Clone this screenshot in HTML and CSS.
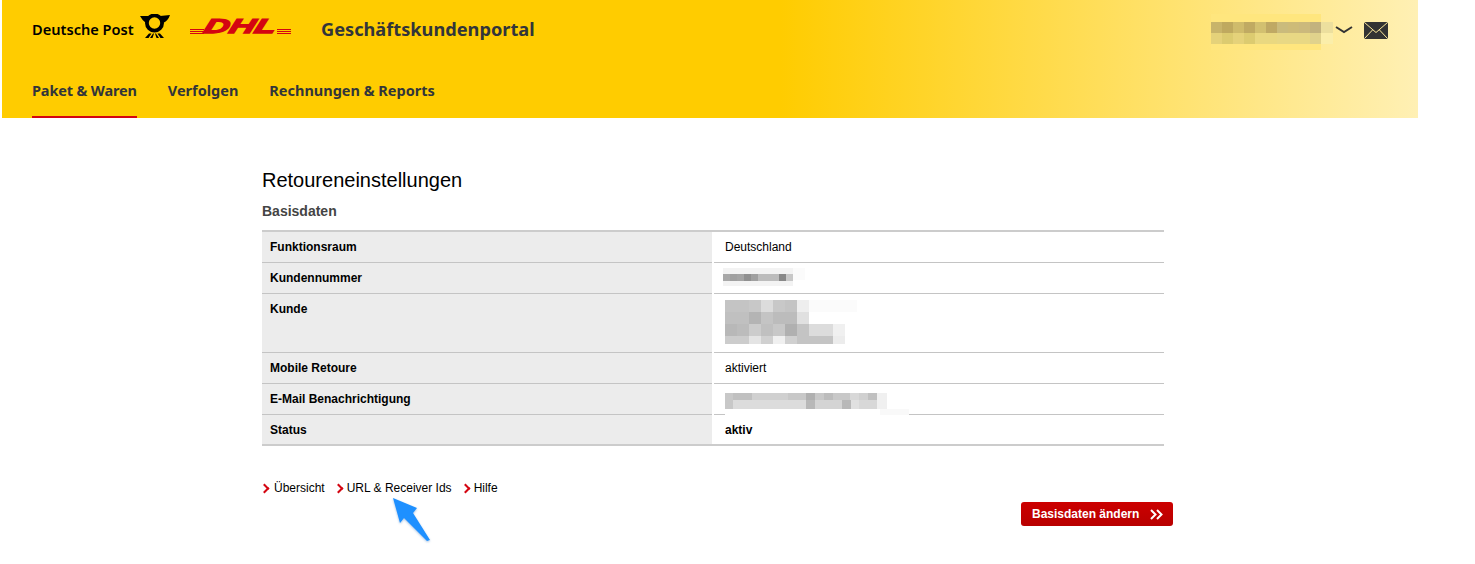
FILE: index.html
```html
<!DOCTYPE html>
<html lang="de">
<head>
    <meta charset="UTF-8">
    <meta name="viewport" content="width=device-width, initial-scale=1.0">
    <title>Retoureneinstellungen</title>
    <link rel="stylesheet" href="styles.css">
</head>
<body>
    <header class="topbar">
        <div class="topbar-row">
            <div class="brand">
                <span class="post-name">Deutsche Post</span>
                <svg class="post-horn" viewBox="0 0 33 24" width="33" height="24">
                    <circle cx="16.5" cy="9" r="7.6" fill="none" stroke="#000" stroke-width="3.8"/>
                    <path d="M2 2 L10 2 L11 4 L8 9 Q4 6 2 2Z M32 1 L22 2 L21 4 L25 9 Q30 7 32 1Z" fill="#000"/>
                    <path d="M7 24 L11 19.5 H13.5 L10.5 24Z M12 24 L15 19.5 H16 L14.5 24Z M26 24 L22 19.5 H19.5 L22.5 24Z M21 24 L18 19.5 H17 L18.5 24Z" fill="#000"/>
                </svg>
                <div class="dhl-logo">
                    <span class="dhl-stripes"></span>
                    <span class="dhl-name">DHL</span>
                    <span class="dhl-stripes"></span>
                </div>
                <span class="portal-name">Geschäftskundenportal</span>
            </div>
            <div class="user-area">
                <svg class="blur-user" width="122" height="36" viewBox="0 0 122 36" shape-rendering="crispEdges">
                    <rect x="0" y="0" width="110" height="36" fill="#ffe67e"/>
                    <g fill="#c8b46a">
                        <rect x="0" y="8" width="11" height="11"/><rect x="22" y="8" width="11" height="11" fill="#cfbb6b"/>
                        <rect x="11" y="8" width="11" height="11" fill="#bfa95f"/><rect x="33" y="8" width="11" height="11" fill="#c0aa62"/>
                        <rect x="44" y="8" width="11" height="11" fill="#d2c070"/><rect x="55" y="8" width="11" height="11" fill="#bfa964"/>
                        <rect x="66" y="8" width="11" height="11" fill="#cabb7c"/><rect x="77" y="8" width="11" height="11" fill="#cdbb78"/>
                        <rect x="88" y="8" width="11" height="11" fill="#cbb97c"/><rect x="99" y="8" width="11" height="11" fill="#c2b27e"/>
                        <rect x="110" y="8" width="12" height="11" fill="#ecdf9e"/>
                    </g>
                    <g fill="#e5d27a">
                        <rect x="0" y="19" width="11" height="11"/><rect x="11" y="19" width="11" height="11" fill="#dccb70"/>
                        <rect x="22" y="19" width="11" height="11"/><rect x="33" y="19" width="11" height="11" fill="#dccb70"/>
                        <rect x="44" y="19" width="22" height="11" fill="#e9d880"/><rect x="66" y="19" width="33" height="11" fill="#e8d884"/>
                        <rect x="99" y="19" width="11" height="11" fill="#e0d28c"/><rect x="110" y="19" width="12" height="11" fill="#fbeeaa"/>
                    </g>
                </svg>
                <svg class="user-chevron" width="18" height="8" viewBox="0 0 18 8">
                    <path d="M1 1 L9 6 L17 1" fill="none" stroke="#333" stroke-width="2"/>
                </svg>
                <svg class="mail-icon" width="24" height="17" viewBox="0 0 24 17">
                    <rect width="24" height="17" rx="1.5" fill="#333"/>
                    <path d="M0.5 0.5 L12 10.5 L23.5 0.5 M0.5 16.5 L8.5 8 M23.5 16.5 L15.5 8" fill="none" stroke="#ffeb9c" stroke-width="1"/>
                </svg>
            </div>
        </div>
        <nav class="main-nav">
            <a class="nav-item active" href="#">Paket &amp; Waren</a>
            <a class="nav-item" href="#">Verfolgen</a>
            <a class="nav-item" href="#">Rechnungen &amp; Reports</a>
        </nav>
    </header>

    <main class="content">
        <h1>Retoureneinstellungen</h1>
        <h2>Basisdaten</h2>
        <div class="data-table">
            <div class="data-row">
                <div class="data-label">Funktionsraum</div>
                <div class="data-value">Deutschland</div>
            </div>
            <div class="data-row">
                <div class="data-label">Kundennummer</div>
                <div class="data-value">
                    <svg class="blur blur-number" width="84" height="18" viewBox="0 0 84 18" shape-rendering="crispEdges">
                        <rect width="70" height="18" fill="#f3f3f3"/>
                        <rect x="70" width="12" height="12" fill="#fbfbfb"/>
                        <rect y="6" width="7" height="7" fill="#a8a8a8"/><rect x="7" y="6" width="7" height="7" fill="#a0a0a0"/>
                        <rect x="14" y="6" width="7" height="7" fill="#a4a4a4"/><rect x="21" y="6" width="7" height="7" fill="#909090"/>
                        <rect x="28" y="6" width="7" height="7" fill="#a0a0a0"/><rect x="35" y="6" width="7" height="7" fill="#bcbcbc"/>
                        <rect x="42" y="6" width="14" height="7" fill="#bcbcbc"/><rect x="56" y="6" width="7" height="7" fill="#888"/>
                        <rect x="63" y="6" width="7" height="7" fill="#c8c8c8"/>
                    </svg>
                </div>
            </div>
            <div class="data-row row-tall">
                <div class="data-label">Kunde</div>
                <div class="data-value">
                    <svg class="blur blur-customer" width="132" height="46" viewBox="0 0 132 46" shape-rendering="crispEdges">
                        <rect width="132" height="12" fill="#fbfbfb"/>
                        <g>
                            <rect width="24" height="12" fill="#c4c4c4"/><rect x="24" width="12" height="12" fill="#c8c8c8"/>
                            <rect x="36" width="12" height="12" fill="#dcdcdc"/><rect x="48" width="12" height="12" fill="#c8c8c8"/>
                            <rect x="60" width="12" height="12" fill="#c4c4c4"/><rect x="72" width="12" height="12" fill="#eeeeee"/>
                        </g>
                        <g transform="translate(0 12)">
                            <rect width="24" height="12" fill="#c0c0c0"/><rect x="24" width="12" height="12" fill="#b4b4b4"/>
                            <rect x="36" width="12" height="12" fill="#c4c4c4"/><rect x="48" width="24" height="12" fill="#bcbcbc"/>
                            <rect x="72" width="12" height="12" fill="#e0e0e0"/>
                        </g>
                        <g transform="translate(0 24)">
                            <rect width="12" height="12" fill="#b8b8b8"/><rect x="12" width="12" height="12" fill="#bcbcbc"/>
                            <rect x="24" width="12" height="12" fill="#cccccc"/><rect x="36" width="12" height="12" fill="#c0c0c0"/>
                            <rect x="48" width="12" height="12" fill="#c8c8c8"/><rect x="60" width="12" height="12" fill="#b0b0b0"/>
                            <rect x="72" width="12" height="12" fill="#c4c4c4"/><rect x="84" width="24" height="12" fill="#dcdcdc"/>
                            <rect x="108" width="12" height="12" fill="#f0f0f0"/>
                        </g>
                        <g transform="translate(0 36)">
                            <rect width="24" height="8" fill="#cccccc"/><rect x="24" width="12" height="8" fill="#e4e4e4"/>
                            <rect x="36" width="12" height="8" fill="#d0d0d0"/><rect x="48" width="12" height="8" fill="#f0f0f0"/>
                            <rect x="60" width="12" height="8" fill="#d0d0d0"/><rect x="72" width="36" height="8" fill="#c4c4c4"/>
                            <rect x="108" width="12" height="8" fill="#ececec"/>
                        </g>
                    </svg>
                </div>
            </div>
            <div class="data-row">
                <div class="data-label">Mobile Retoure</div>
                <div class="data-value">aktiviert</div>
            </div>
            <div class="data-row">
                <div class="data-label">E-Mail Benachrichtigung</div>
                <div class="data-value">
                    <svg class="blur blur-mail" width="184" height="22" viewBox="0 0 184 22" shape-rendering="crispEdges">
                        <rect y="16" width="155" height="6" fill="#fff"/>
                        <rect x="155" y="16" width="29" height="6" fill="#f9f9f9"/>
                        <g>
                            <rect width="8" height="7" fill="#c8c8c8"/><rect x="8" width="19" height="7" fill="#c0c0c0"/>
                            <rect x="27" width="36" height="7" fill="#d0d0d0"/><rect x="63" width="18" height="7" fill="#c8c8c8"/>
                            <rect x="81" width="9" height="7" fill="#b0b0b0"/><rect x="90" width="9" height="7" fill="#c8c8c8"/>
                            <rect x="99" width="9" height="7" fill="#bcbcbc"/><rect x="108" width="17" height="7" fill="#c8c8c8"/>
                            <rect x="125" width="9" height="7" fill="#d8d8d8"/><rect x="134" width="9" height="7" fill="#d0d0d0"/>
                            <rect x="143" width="9" height="7" fill="#c0c0c0"/><rect x="152" width="10" height="7" fill="#f0f0f0"/>
                        </g>
                        <g transform="translate(0 7)">
                            <rect width="8" height="9" fill="#c8c8c8"/><rect x="8" width="73" height="9" fill="#dcdcdc"/>
                            <rect x="81" width="9" height="9" fill="#b8b8b8"/><rect x="90" width="27" height="9" fill="#d4d4d4"/>
                            <rect x="117" width="9" height="9" fill="#b8b8b8"/><rect x="126" width="8" height="9" fill="#e0e0e0"/>
                            <rect x="134" width="18" height="9" fill="#d8d8d8"/><rect x="152" width="10" height="9" fill="#f0f0f0"/>
                        </g>
                    </svg>
                </div>
            </div>
            <div class="data-row">
                <div class="data-label">Status</div>
                <div class="data-value value-strong">aktiv</div>
            </div>
        </div>

        <div class="link-list">
            <a href="#">Übersicht</a>
            <a href="#">URL &amp; Receiver Ids</a>
            <a href="#">Hilfe</a>
        </div>
        <div class="actions">
            <button class="primary-btn">Basisdaten ändern
                <svg width="13" height="11" viewBox="0 0 13 11">
                    <path d="M1 1 L5.5 5.5 L1 10 M7 1 L11.5 5.5 L7 10" fill="none" stroke="#fff" stroke-width="2"/>
                </svg>
            </button>
        </div>
    </main>

    <!-- annotation arrow on top of the screenshot -->
    <svg class="note-arrow" width="46" height="50" viewBox="0 0 46 50">
        <path d="M3 1 L27 11 L23 16 L40 43 L37 44 L14 21 L10 26 Z" fill="#1e90ff"/>
    </svg>
</body>
</html>
```

FILE: styles.css
```css
body { margin: 0; font-family: "Liberation Sans", Arial, sans-serif; background: #fff; color: #000; }
a { color: inherit; text-decoration: none; }

.topbar { width: 1416px; height: 118px; margin-left: 2px; background: linear-gradient(90deg, #ffcc00 0, #ffcc00 55%, #fff0b4 100%); color: #32353a; font-family: "Noto Sans", sans-serif; font-weight: 700; }
.topbar-row { display: flex; justify-content: space-between; height: 62px; }
.brand { display: flex; align-items: center; padding-left: 30px; height: 58px; }
.post-name { font-size: 14.6px; font-weight: 600; color: #000; width: 106px; }
.post-horn { align-self: flex-start; margin-top: 14px; }
.dhl-logo { display: flex; align-items: flex-end; align-self: flex-start; margin: 19px 0 0 19px; width: 101px; height: 15px; }
.dhl-name { font: italic 700 20px/15px "Liberation Sans", sans-serif; color: #d40511; -webkit-text-stroke: 1.3px #d40511; transform: scaleX(1.75) skewX(-10deg); width: 73px; text-align: center; }
.dhl-stripes { width: 14px; height: 5px; background: repeating-linear-gradient(180deg, #d40511 0, #d40511 1px, transparent 1px, transparent 2px); }
.portal-name { font-size: 18.2px; margin-left: 30px; }

.user-area { display: flex; align-items: flex-start; padding-top: 14px; margin-right: 30px; }
.user-chevron { margin: 12px 0 0 2px; }
.mail-icon { margin: 8px 0 0 11px; }

.main-nav { display: flex; gap: 31px; padding-left: 30px; height: 56px; }
.nav-item { font-size: 14.5px; line-height: 56px; height: 54px; color: #32353a; }
.nav-item.active { border-bottom: 2px solid #d40511; letter-spacing: -0.15px; }

.content { width: 911px; margin-left: 262px; padding-top: 50px; }
h1 { margin: 0; font-size: 20px; font-weight: 400; line-height: 24px; }
h2 { margin: 10px 0; font-size: 14px; line-height: 18px; color: #444; }

.data-table { width: 902px; border-top: 2px solid #ccc; border-bottom: 2px solid #ccc; font-size: 12px; }
.data-row { display: grid; grid-template-columns: 450px 450px; gap: 2px; min-height: 31px; }
.data-row:last-child { min-height: 29px; }
.row-tall { min-height: 59px; }
.data-label { background: #ececec; padding: 8px 8px 0; font-weight: 700; line-height: 15px; }
.data-value { padding: 8px 11px 0; line-height: 15px; }
.data-row:not(:last-child) .data-label, .data-row:not(:last-child) .data-value { border-bottom: 1px solid #c4c4c4; }
.value-strong { font-weight: 700; }

.blur { display: block; position: relative; overflow: visible; }
.blur-number { margin: -3px 0 0 -2px; }
.blur-customer { margin-top: -2px; }
.blur-mail { margin: 1px 0 -10px; }

.link-list { display: flex; gap: 11px; margin-top: 35px; font-size: 12px; line-height: 15px; }
.link-list a { padding-left: 11px; position: relative; }
.link-list a:first-child { padding-left: 12px; }
.link-list a::before { content: ""; position: absolute; left: -1px; top: 4px; width: 5px; height: 5px; border-top: 2px solid #d40511; border-right: 2px solid #d40511; transform: rotate(45deg); }

.actions { display: flex; justify-content: flex-end; margin-top: 6px; }
.primary-btn { display: flex; align-items: center; gap: 11px; width: 152px; height: 24px; padding: 0 0 0 11px; border: none; border-radius: 3px; background: linear-gradient(180deg, #cc0000, #b80000); color: #fff; font: 700 12px "Liberation Sans", sans-serif; }

.note-arrow { position: absolute; left: 390px; top: 497px; filter: drop-shadow(0 1px 1px rgba(30, 100, 180, 0.4)); }
```
